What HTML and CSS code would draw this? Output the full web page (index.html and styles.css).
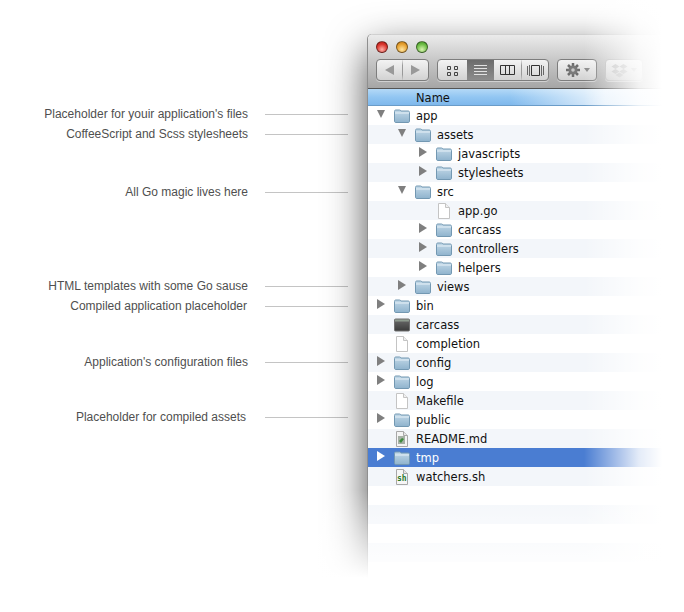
FILE: index.html
```html
<!DOCTYPE html>
<html lang="en">
<head>
    <meta charset="UTF-8">
    <meta name="viewport" content="width=device-width, initial-scale=1.0">
    <title>Project layout</title>
    <link rel="stylesheet" href="styles.css">
</head>
<body>
    <svg class="defs" width="0" height="0">
        <defs>
            <linearGradient id="folderBody" x1="0" y1="0" x2="0" y2="1">
                <stop offset="0" stop-color="#c3d9e8"/>
                <stop offset="1" stop-color="#8fb3cd"/>
            </linearGradient>
            <linearGradient id="binaryBody" x1="0" y1="0" x2="0" y2="1">
                <stop offset="0" stop-color="#6a6a6a"/>
                <stop offset="1" stop-color="#3a3a3a"/>
            </linearGradient>
            <symbol id="folder" viewBox="0 0 16 14">
                <path d="M.5 2.500C.5 1.400 1 1 2 1h3.500c.8 0 1 .4 1.400 1H14c1 0 1.500.5 1.500 1.500V12c0 1-.5 1.500-1.500 1.500H2c-1 0-1.500-.5-1.500-1.500z" fill="url(#folderBody)" stroke="#7398b2"/>
                <path d="M1 4h14" stroke="#e6f0f7"/>
            </symbol>
            <symbol id="file" viewBox="0 0 12 16">
                <path d="M.5.500H7.500L11.500 4.500v11H.5z" fill="#fff" stroke="#c4c4c4"/>
                <path d="M7.500.5v4h4" fill="#f0f0f0" stroke="#c4c4c4"/>
            </symbol>
            <symbol id="readme" viewBox="0 0 12 16">
                <path d="M.5.500H7.500L11.500 4.500v11H.5z" fill="#f4f4f4" stroke="#a8a8a8"/>
                <path d="M7.500.5v4h4" fill="#e4e4e4" stroke="#a8a8a8"/>
                <rect x="2" y="5" width="7" height="8" fill="#a6b0a6"/>
                <path d="M3 10l3-3 2 1-3 4z" fill="#3d8a3d"/>
            </symbol>
            <symbol id="script" viewBox="0 0 12 16">
                <path d="M.5.500H7.500L11.500 4.500v11H.5z" fill="#f6f6f6" stroke="#a8a8a8"/>
                <path d="M7.500.5v4h4" fill="#e4e4e4" stroke="#a8a8a8"/>
            </symbol>
            <symbol id="binary" viewBox="0 0 16 13">
                <rect x=".5" y=".5" width="15" height="12" rx="1" fill="url(#binaryBody)" stroke="#707070"/>
                <rect x="1" y="1" width="14" height="2" fill="#8d9a8d"/>
            </symbol>
        </defs>
    </svg>

    <div class="layout">
        <!-- annotations -->
        <ul class="notes">
            <li class="note">Placeholder for youir application's files</li>
            <li class="note">CoffeeScript and Scss stylesheets</li>
            <li class="note gap-38">All Go magic lives here</li>
            <li class="note gap-74">HTML templates with some Go sause</li>
            <li class="note end-1">Compiled application placeholder</li>
            <li class="note gap-36">Application's configuration files</li>
            <li class="note gap-35 end-2">Placeholder for compiled assets</li>
        </ul>

        <!-- finder window -->
        <div class="window">
            <div class="titlebar">
                <div class="lights">
                    <span class="light red"></span>
                    <span class="light yellow"></span>
                    <span class="light green"></span>
                </div>
                <div class="toolbar">
                    <div class="btn-group nav">
                        <span class="btn"><i class="tri tri-left"></i></span>
                        <span class="btn"><i class="tri tri-right"></i></span>
                    </div>
                    <div class="btn-group views">
                        <span class="btn">
                            <svg width="12" height="11" viewBox="0 0 12 11"><path d="M.5 1.500h3v3h-3zM7.500 1.500h3v3h-3zM.5 7.500h3v3h-3zM7.500 7.500h3v3h-3z" fill="none" stroke="#444"/></svg>
                        </span>
                        <span class="btn active">
                            <svg width="15" height="12" viewBox="0 0 15 12"><path d="M1 1.500h13M1 4.500h13M1 7.500h13M1 10.500h13" stroke="#e2e2e2"/></svg>
                        </span>
                        <span class="btn">
                            <svg width="15" height="10" viewBox="0 0 15 10"><path d="M.5.500h14v9H.5zM5.500.5v9M9.500.5v9" fill="none" stroke="#333"/></svg>
                        </span>
                        <span class="btn">
                            <svg width="17" height="11" viewBox="0 0 17 11"><path d="M.5 1v9M2.500 0v11M14.500 0v11M16.500 1v9" stroke="#666"/><path d="M4.500.5h8v10h-8z" fill="none" stroke="#333"/></svg>
                        </span>
                    </div>
                    <div class="btn-group action">
                        <span class="btn">
                            <svg width="16" height="16" viewBox="0 0 16 16"><path d="M8 1v14M1 8h14M3 3l10 10M13 3L3 13" stroke="#6e6e6e" stroke-width="2.500"/><circle cx="8" cy="8" r="4.500" fill="#7a7a7a"/><circle cx="8" cy="8" r="1.800" fill="#c8c8c8"/></svg>
                            <i class="tri tri-down"></i>
                        </span>
                    </div>
                    <div class="btn-group dropbox">
                        <span class="btn">
                            <svg width="17" height="15" viewBox="0 0 17 15"><path d="M4.500 1l4 2.500-4 2.500-4-2.500zM12.500 1l4 2.500-4 2.500-4-2.500zM4.500 6l4 2.500-4 2.500-4-2.500zM12.500 6l4 2.500-4 2.500-4-2.500zM4.500 12l4-2.500 4 2.500-4 2.500z" fill="#bdbdbd"/></svg>
                            <i class="tri tri-down"></i>
                        </span>
                    </div>
                </div>
            </div>

            <div class="col-header">Name</div>

            <ul class="files">
                <li class="row"><i class="tri tri-open"></i><svg class="ico"><use href="#folder"/></svg><span>app</span></li>
                <li class="row lvl-1"><i class="tri tri-open"></i><svg class="ico"><use href="#folder"/></svg><span>assets</span></li>
                <li class="row lvl-2"><i class="tri tri-closed"></i><svg class="ico"><use href="#folder"/></svg><span>javascripts</span></li>
                <li class="row lvl-2"><i class="tri tri-closed"></i><svg class="ico"><use href="#folder"/></svg><span>stylesheets</span></li>
                <li class="row lvl-1"><i class="tri tri-open"></i><svg class="ico"><use href="#folder"/></svg><span>src</span></li>
                <li class="row lvl-2 no-arrow"><svg class="ico doc"><use href="#file"/></svg><span>app.go</span></li>
                <li class="row lvl-2"><i class="tri tri-closed"></i><svg class="ico"><use href="#folder"/></svg><span>carcass</span></li>
                <li class="row lvl-2"><i class="tri tri-closed"></i><svg class="ico"><use href="#folder"/></svg><span>controllers</span></li>
                <li class="row lvl-2"><i class="tri tri-closed"></i><svg class="ico"><use href="#folder"/></svg><span>helpers</span></li>
                <li class="row lvl-1"><i class="tri tri-closed"></i><svg class="ico"><use href="#folder"/></svg><span>views</span></li>
                <li class="row"><i class="tri tri-closed"></i><svg class="ico"><use href="#folder"/></svg><span>bin</span></li>
                <li class="row no-arrow"><svg class="ico"><use href="#binary"/></svg><span>carcass</span></li>
                <li class="row no-arrow"><svg class="ico doc"><use href="#file"/></svg><span>completion</span></li>
                <li class="row"><i class="tri tri-closed"></i><svg class="ico"><use href="#folder"/></svg><span>config</span></li>
                <li class="row"><i class="tri tri-closed"></i><svg class="ico"><use href="#folder"/></svg><span>log</span></li>
                <li class="row no-arrow"><svg class="ico doc"><use href="#file"/></svg><span>Makefile</span></li>
                <li class="row"><i class="tri tri-closed"></i><svg class="ico"><use href="#folder"/></svg><span>public</span></li>
                <li class="row no-arrow"><svg class="ico doc"><use href="#readme"/></svg><span>README.md</span></li>
                <li class="row selected"><i class="tri tri-closed"></i><svg class="ico"><use href="#folder"/></svg><span>tmp</span></li>
                <li class="row no-arrow"><span class="sh-icon"><svg class="ico doc"><use href="#script"/></svg><b>sh</b></span><span>watchers.sh</span></li>
                <li class="row"></li>
                <li class="row"></li>
                <li class="row"></li>
                <li class="row"></li>
                <li class="row"></li>
            </ul>
        </div>
    </div>

    <!-- the window dissolves into the page on the right and at the bottom -->
    <div class="fade-right"></div>
    <div class="fade-bottom"></div>
</body>
</html>
```

FILE: styles.css
```css
* {
    box-sizing: border-box;
}

html, body {
    margin: 0;
    padding: 0;
    background-color: #fff;
}

body {
    position: relative;
    width: 684px;
    height: 612px;
    overflow: hidden;
    font-family: "Liberation Sans", Arial, sans-serif;
}

.defs {
    position: absolute;
}

.layout {
    display: flex;
    align-items: flex-start;
}

/* annotations */
.notes {
    list-style: none;
    width: 368px;
    margin: 0;
    padding: 104px 0 0 0;
    flex-shrink: 0;
}

.note {
    display: flex;
    justify-content: flex-end;
    align-items: center;
    height: 20px;
    padding-right: 20px;
    font-size: 12px;
    color: #4f4f4f;
}

.note::after {
    content: "";
    flex: none;
    width: 83px;
    height: 1px;
    margin-left: 17px;
    background-color: #c4c4c4;
}

.gap-38 { margin-top: 38px; }
.gap-74 { margin-top: 74px; }
.gap-36 { margin-top: 36px; }
.gap-35 { margin-top: 35px; }

.end-1::after { margin-left: 18px; }
.end-2::after { margin-left: 19px; }

/* window */
.window {
    flex: none;
    width: 316px;
    height: 578px;
    margin-top: 34px;
    background-color: #fff;
    border-radius: 5px 5px 0 0;
    box-shadow: -1px 0 0 #8f8f8f, 0 16px 42px rgba(0, 0, 0, 0.72);
    overflow: hidden;
}

.titlebar {
    height: 55px;
    padding: 6px 8px 0;
    background: linear-gradient(#ebebeb, #c9c9c9 45%, #a6a6a6);
    border-top: 1px solid #d0d0d0;
    border-bottom: 1px solid #555;
}

.lights {
    display: flex;
    gap: 8px;
    height: 12px;
}

.light {
    width: 12px;
    height: 12px;
    border-radius: 50%;
    border: 1px solid rgba(0, 0, 0, 0.45);
}

.red { background: radial-gradient(circle at 50% 75%, #ffb0a8, #d9342c 60%, #a81c18); }
.yellow { background: radial-gradient(circle at 50% 75%, #ffe6a0, #e6a030 60%, #b87414); }
.green { background: radial-gradient(circle at 50% 75%, #d8f4b0, #6cbc44 60%, #3e8a24); }

.toolbar {
    display: flex;
    gap: 8px;
    margin-top: 6px;
}

.btn-group {
    display: flex;
    height: 22px;
    border: 1px solid #7d7d7d;
    border-radius: 4px;
    background: linear-gradient(#f3f3f3, #d2d2d2);
    box-shadow: 0 1px 0 rgba(255, 255, 255, 0.45);
    overflow: hidden;
}

.btn {
    display: flex;
    align-items: center;
    justify-content: center;
    gap: 3px;
}

.btn + .btn {
    border-left: 1px solid;
    border-image: linear-gradient(rgba(150, 150, 150, 0), #999 30%, #999 70%, rgba(150, 150, 150, 0)) 1;
}

.nav { width: 53px; }
.nav .btn { flex: 1; }

.views { width: 112px; }
.views .btn { flex: none; width: 27px; }
.views .btn:first-child { width: 29px; }
.views .active { background: linear-gradient(#6c6c6c, #8c8c8c); border-left: 0; }
.views .active + .btn { border-left: 0; }

.action { width: 40px; justify-content: center; }
.dropbox { width: 38px; justify-content: center; border-color: #b8b8b8; opacity: 0.9; }

/* triangles */
.tri {
    display: block;
    width: 0;
    height: 0;
    border-style: solid;
    border-color: transparent;
}

.tri-left { border-width: 5px 9px 5px 0; border-right-color: #999; }
.tri-right { border-width: 5px 0 5px 9px; border-left-color: #999; }
.tri-down { border-width: 4px 3.500px 0; border-top-color: #8a8a8a; }
.dropbox .tri-down { border-top-color: #c4c4c4; }

.tri-open {
    flex: none;
    margin: 0 9px 3px 9px;
    border-width: 8px 4px 0;
    border-top-color: #7f7f7f;
}

.tri-closed {
    flex: none;
    margin: 0 9px 3px 9px;
    border-width: 5px 0 5px 8px;
    border-left-color: #7f7f7f;
}

/* column header */
.col-header {
    height: 17px;
    padding: 2px 0 0 48px;
    font-family: "DejaVu Sans", sans-serif;
    font-size: 11.500px;
    line-height: 15px;
    color: #111;
    background:
        linear-gradient(to right, rgba(255, 255, 255, 0) 45%, rgba(255, 255, 255, 0.8) 75%),
        linear-gradient(#b4d9f7, #92c6f2 50%, #7fb8ec);
    border-bottom: 1px solid #6a9cc8;
}

/* file list */
.files {
    list-style: none;
    margin: 0;
    padding: 0;
}

.row {
    display: flex;
    align-items: center;
    height: 19px;
    font-family: "DejaVu Sans", sans-serif;
    font-size: 11.500px;
    color: #111;
}

.row:nth-child(even) {
    background-color: #f3f6fa;
}

.lvl-1 { padding-left: 21px; }
.lvl-2 { padding-left: 42px; }
.no-arrow { padding-left: 26px; }
.lvl-2.no-arrow { padding-left: 68px; }

.ico {
    flex: none;
    width: 16px;
    height: 14px;
    margin-right: 6px;
}

.doc {
    height: 16px;
}

.sh-icon {
    position: relative;
    display: flex;
}

.sh-icon b {
    position: absolute;
    left: 3px;
    top: 5px;
    font-family: "DejaVu Sans Mono", monospace;
    font-size: 8px;
    line-height: 9px;
    color: #2d7a2d;
}

.selected {
    color: #fff;
    background-color: #4a7dd2;
}

.selected .tri-closed {
    border-left-color: #fff;
}

/* fades over the window */
.fade-right {
    position: absolute;
    top: 0;
    right: 0;
    bottom: 0;
    width: 100px;
    background: linear-gradient(to right, rgba(255, 255, 255, 0), rgba(255, 255, 255, 0.85) 55%, #fff 78%);
}

.fade-bottom {
    position: absolute;
    left: 300px;
    right: 0;
    bottom: 0;
    height: 122px;
    background: linear-gradient(rgba(255, 255, 255, 0), #fff 72%);
}
```
